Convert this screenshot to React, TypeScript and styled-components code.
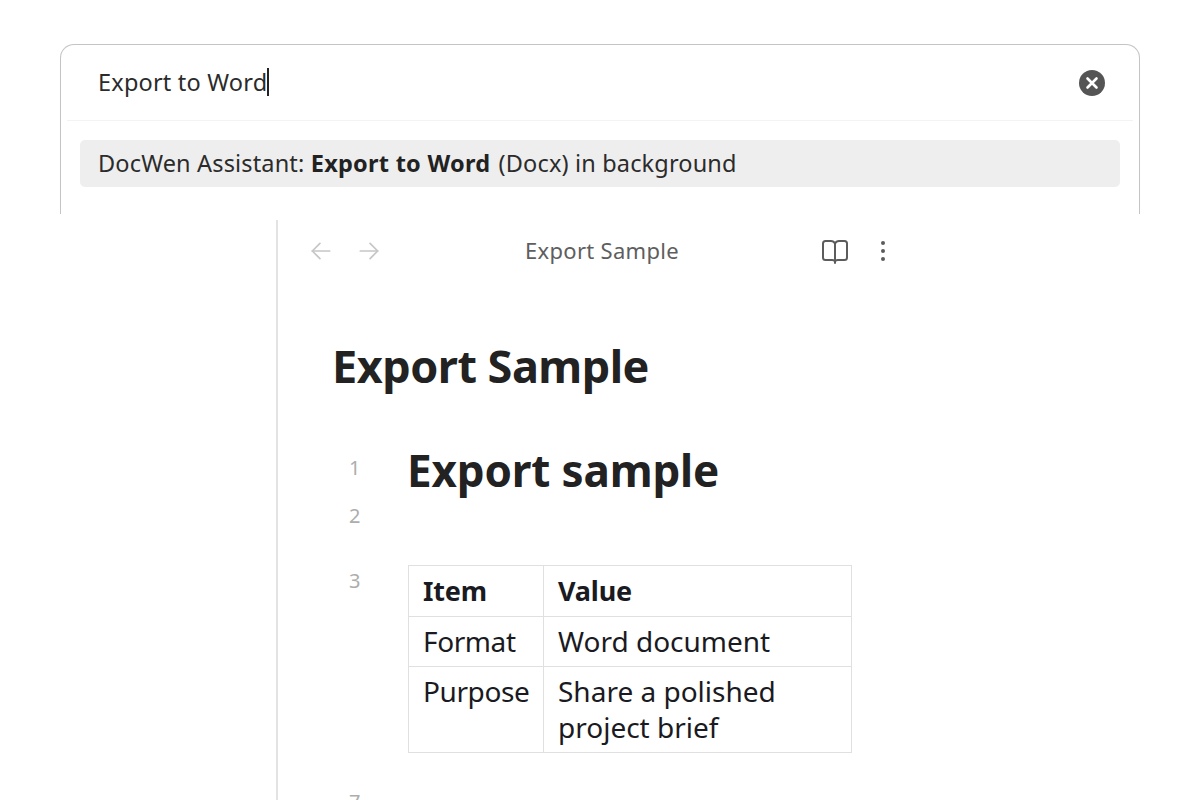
import React from "react";
import styled, { createGlobalStyle } from "styled-components";

const Global = createGlobalStyle`
  html, body { margin: 0; padding: 0; background: #fff; }
  body { font-family: "Noto Sans", "Open Sans", sans-serif; color: #222; }
`;

const Page = styled.div`
  width: 1200px;
  height: 800px;
  overflow: hidden;
  padding-top: 44px;
  box-sizing: border-box;
  background: #fff;
`;

const Palette = styled.section`
  width: 1080px;
  height: 170px;
  margin-left: 60px;
  box-sizing: border-box;
  border: 1px solid #c4c4c4;
  border-bottom: none;
  border-radius: 14px 14px 0 0;
  background: #fff;
`;

const SearchRow = styled.div`
  height: 76px;
  margin: 0 6px;
  padding: 0 28px 0 31px;
  box-sizing: border-box;
  display: flex;
  align-items: center;
  justify-content: space-between;
  border-bottom: 1px solid #f3f3f3;
`;

const Query = styled.div`
  display: flex;
  align-items: center;
  font-size: 23.5px;
  letter-spacing: 0.2px;
  color: #2b2b2b;
  height: 28px;
  margin-top: -2px;
`;

const Caret = styled.span`
  width: 1.5px;
  height: 28px;
  background: #222;
`;

const Results = styled.div`
  padding: 19px 19px 0;
`;

const Result = styled.div`
  height: 47px;
  padding: 0 18px 2px;
  box-sizing: border-box;
  display: flex;
  align-items: center;
  white-space: pre;
  font-size: 23.5px;
  letter-spacing: 0.16px;
  color: #2b2b2b;
  background: #eeeeee;
  border-radius: 5px;
`;

const Strong = styled.strong`
  font-weight: 700;
  letter-spacing: 0.26px;
  margin-right: 2px;
  color: #222;
`;

const Pane = styled.main`
  width: 924px;
  height: 580px;
  margin: 6px 0 0 276px;
  box-sizing: border-box;
  border-left: 2px solid #e3e3e3;
`;

const Header = styled.header`
  height: 62px;
  display: flex;
  align-items: center;
  padding-left: 30px;
  box-sizing: border-box;
`;

const Nav = styled.div`
  display: flex;
  gap: 22px;
  width: 189px;
  color: #c6c6c6;
`;

const HeaderTitle = styled.div`
  width: 240px;
  text-align: center;
  font-size: 22px;
  letter-spacing: 0.3px;
  color: #5e5e5e;
  margin: -2px 0 0 -15px;
`;

const Actions = styled.div`
  display: flex;
  align-items: center;
  gap: 28px;
  margin-left: 97px;
  color: #5c5c5c;
`;

const Content = styled.div`
  padding: 54px 0 0 55px;
`;

const Title = styled.h1`
  margin: 0 0 0 -1px;
  font-size: 45px;
  line-height: 60px;
  font-weight: 700;
  letter-spacing: -0.5px;
  color: #222;
`;

const Editor = styled.div`
  margin-top: 50px;
  display: grid;
  grid-template-columns: 75px 1fr;
`;

const LineNo = styled.div<{ $h: number; $top: number }>`
  height: ${(p) => p.$h}px;
  padding: ${(p) => p.$top}px 0 0 16px;
  font-size: 20px;
  line-height: 28px;
  color: #adadad;
  box-sizing: border-box;
`;

const H2 = styled.h2`
  margin: 0 0 0 -1px;
  height: 48px;
  font-size: 44px;
  line-height: 48px;
  font-weight: 700;
  letter-spacing: -0.15px;
  color: #222;
`;

const Gap = styled.div<{ $h: number }>`
  height: ${(p) => p.$h}px;
`;

const Table = styled.table`
  width: 444px;
  align-self: start;
  border-collapse: collapse;
  table-layout: fixed;
  font-size: 28px;
  line-height: 36px;
  color: #1a1a22;
`;

const Th = styled.th<{ $w?: number }>`
  ${(p) => (p.$w ? `width: ${p.$w}px;` : "")}
  border: 1px solid #e0e0e0;
  height: 51px;
  padding: 0 14px;
  box-sizing: border-box;
  text-align: left;
  font-weight: 700;
  font-size: 27px;
  letter-spacing: -0.2px;
`;

const Td = styled.td`
  border: 1px solid #e0e0e0;
  padding: 6px 14px 7px;
  vertical-align: top;
`;

const LabelCell = styled(Td)`
  letter-spacing: -0.4px;
`;

function BackIcon() {
  return (
    <svg width="26" height="26" viewBox="0 0 24 24" fill="none" stroke="currentColor" strokeWidth="1.6" strokeLinecap="round" strokeLinejoin="round">
      <path d="M20 12H4" />
      <path d="M11 5l-7 7 7 7" />
    </svg>
  );
}

function ForwardIcon() {
  return (
    <svg width="26" height="26" viewBox="0 0 24 24" fill="none" stroke="currentColor" strokeWidth="1.6" strokeLinecap="round" strokeLinejoin="round">
      <path d="M4 12h16" />
      <path d="M13 5l7 7-7 7" />
    </svg>
  );
}

function BookIcon() {
  return (
    <svg width="32" height="32" viewBox="0 0 32 32" fill="none" stroke="currentColor" strokeWidth="2" strokeLinecap="round" strokeLinejoin="round">
      <path d="M16 8.500C15 6.500 13.500 6 12 6H6.500A2.500 2.500 0 0 0 4 8.500v14A2.500 2.500 0 0 0 6.500 25H13c1.700 0 3 .7 3 2 0-1.300 1.300-2 3-2h6.500a2.500 2.500 0 0 0 2.500-2.500v-14A2.500 2.500 0 0 0 25.500 6H20c-1.500 0-3 .5-4 2.500z" />
      <path d="M16 8.500V28" />
    </svg>
  );
}

function MoreIcon() {
  return (
    <svg width="8" height="24" viewBox="0 0 8 24" fill="currentColor">
      <circle cx="4" cy="4" r="2" />
      <circle cx="4" cy="12" r="2" />
      <circle cx="4" cy="20" r="2" />
    </svg>
  );
}

function ClearIcon() {
  return (
    <svg width="26" height="26" viewBox="0 0 26 26">
      <circle cx="13" cy="13" r="13" fill="#555" />
      <path d="M8.500 8.500l9 9M17.500 8.500l-9 9" stroke="#fff" strokeWidth="2.600" strokeLinecap="round" />
    </svg>
  );
}

export default function App() {
  return (
    <Page>
      <Global />
      <Palette>
        <SearchRow>
          <Query>
            Export to Word
            <Caret />
          </Query>
          <ClearIcon />
        </SearchRow>
        <Results>
          <Result>
            DocWen Assistant: <Strong>Export to Word</Strong> (Docx) in background
          </Result>
        </Results>
      </Palette>
      <Pane>
        <Header>
          <Nav>
            <BackIcon />
            <ForwardIcon />
          </Nav>
          <HeaderTitle>Export Sample</HeaderTitle>
          <Actions>
            <BookIcon />
            <MoreIcon />
          </Actions>
        </Header>
        <Content>
          <Title>Export Sample</Title>
          <Editor>
            <LineNo $h={48} $top={8}>1</LineNo>
            <H2>Export sample</H2>
            <LineNo $h={71} $top={8}>2</LineNo>
            <Gap $h={71} />
            <LineNo $h={223} $top={2}>3</LineNo>
            <Table>
              <thead>
                <tr>
                  <Th $w={135}>Item</Th>
                  <Th>Value</Th>
                </tr>
              </thead>
              <tbody>
                <tr>
                  <LabelCell>Format</LabelCell>
                  <Td>Word document</Td>
                </tr>
                <tr>
                  <LabelCell>Purpose</LabelCell>
                  <Td>Share a polished project brief</Td>
                </tr>
              </tbody>
            </Table>
            <LineNo $h={28} $top={0}>7</LineNo>
          </Editor>
        </Content>
      </Pane>
    </Page>
  );
}
